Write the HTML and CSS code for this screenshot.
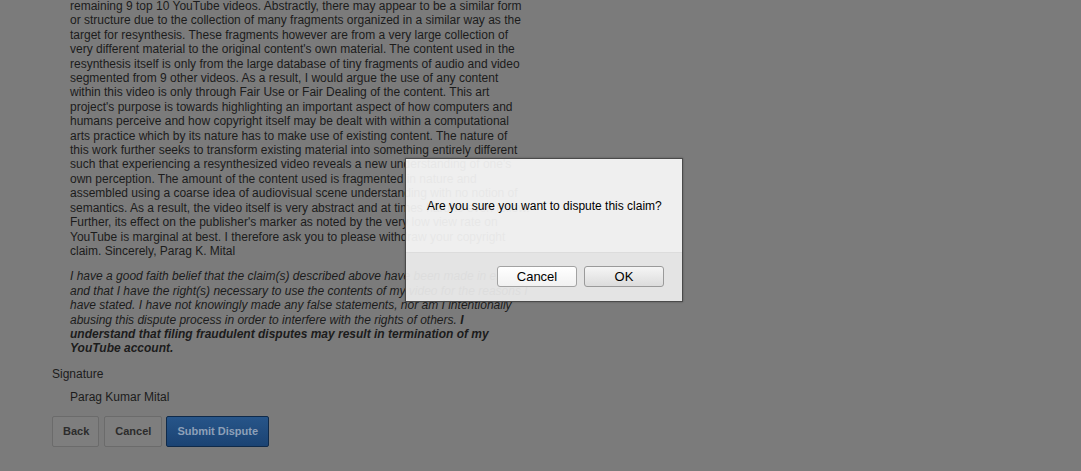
FILE: index.html
```html
<!DOCTYPE html>
<html>
<head>
<meta charset="utf-8">
<link rel="stylesheet" href="styles.css">
</head>
<body>
<div class="page">
  <div class="form">
    <p class="statement">remaining 9 top 10 YouTube videos. Abstractly, there may appear to be a similar form<br>or structure due to the collection of many fragments organized in a similar way as the<br>target for resynthesis. These fragments however are from a very large collection of<br>very different material to the original content's own material. The content used in the<br>resynthesis itself is only from the large database of tiny fragments of audio and video<br>segmented from 9 other videos. As a result, I would argue the use of any content<br>within this video is only through Fair Use or Fair Dealing of the content. This art<br>project's purpose is towards highlighting an important aspect of how computers and<br>humans perceive and how copyright itself may be dealt with within a computational<br>arts practice which by its nature has to make use of existing content. The nature of<br>this work further seeks to transform existing material into something entirely different<br>such that experiencing a resynthesized video reveals a new understanding of one's<br>own perception. The amount of the content used is fragmented in nature and<br>assembled using a coarse idea of audiovisual scene understanding with no notion of<br>semantics. As a result, the video itself is very abstract and at times hard to even follow.<br>Further, its effect on the publisher's marker as noted by the very low view rate on<br>YouTube is marginal at best. I therefore ask you to please withdraw your copyright<br>claim. Sincerely, Parag K. Mital</p>
    <p class="affirm">I have a good faith belief that the claim(s) described above have been made in error<br>and that I have the right(s) necessary to use the contents of my video for the reasons I<br>have stated. I have not knowingly made any false statements, nor am I intentionally<br>abusing this dispute process in order to interfere with the rights of others. <b>I<br>understand that filing fraudulent disputes may result in termination of my<br>YouTube account.</b></p>
    <div class="label">Signature</div>
    <div class="signature">Parag Kumar Mital</div>
    <div class="actions">
      <button class="btn btn-back">Back</button>
      <button class="btn btn-cancel">Cancel</button>
      <button class="btn btn-primary">Submit Dispute</button>
    </div>
  </div>
</div>
<div class="dialog">
  <div class="dialog-body">Are you sure you want to dispute this claim?</div>
  <div class="dialog-footer">
    <button class="dbtn">Cancel</button>
    <button class="dbtn dbtn-default">OK</button>
  </div>
</div>
</body>
</html>
```
FILE: styles.css
```css
html, body {
  margin: 0;
  padding: 0;
  height: 100%;
  background: #7b7b7b;
  overflow: hidden;
}
body {
  font-family: "Liberation Sans", Arial, sans-serif;
  font-size: 12px;
  color: #1c1c1c;
}
.page {
  padding-left: 52px;
}
.form {
  margin-top: -1px;
}
.statement, .affirm {
  margin: 0 0 0 18px;
  line-height: 14.4px;
}
.affirm {
  margin-top: 11px;
  font-style: italic;
}
.label {
  margin-top: 11px;
  line-height: 14.4px;
}
.signature {
  margin: 9px 0 0 18px;
  line-height: 14.4px;
}
.actions {
  display: flex;
  margin-top: 11px;
}
.btn {
  height: 31px;
  padding: 0 9px;
  border: 1px solid #6b6b6b;
  border-radius: 2px;
  background: #7e7e7e;
  color: #2c2c2c;
  font-family: "Liberation Sans", Arial, sans-serif;
  font-size: 11px;
  font-weight: bold;
  white-space: nowrap;
}
.btn-back { padding: 0 9px 0 10px; margin-right: 5px; }
.btn-cancel { padding: 0 10px; margin-right: 4px; }
.btn-primary {
  border-color: #0f2a4a;
  background: linear-gradient(#275589, #1b4373);
  color: #8ea0b8;
  padding: 0 10px;
}
.dialog {
  position: absolute;
  left: 405px;
  top: 158px;
  width: 276px;
  height: 142px;
  border: 1px solid #4a4a4a;
  box-shadow: 0 0 2px rgba(0,0,0,0.3);
  display: flex;
  flex-direction: column;
}
.dialog-body {
  height: 94px;
  box-sizing: border-box;
  padding: 40px 0 0 21px;
  background: rgba(248, 248, 248, 0.92);
  font-size: 12px;
  color: #000;
  border-bottom: 1px solid #dcdcdc;
}
.dialog-footer {
  flex: 1;
  background: rgba(236, 236, 236, 0.93);
  display: flex;
  justify-content: flex-end;
  align-items: flex-start;
  gap: 7px;
  padding: 13px 18px 0 0;
}
.dbtn {
  width: 80px;
  height: 21px;
  border: 1px solid #a2a2a2;
  border-radius: 3px;
  background: linear-gradient(#ffffff, #f1f1f1);
  font-family: "Liberation Sans", Arial, sans-serif;
  font-size: 13px;
  color: #000;
  padding: 0;
}
.dbtn-default {
  background: linear-gradient(#f5f5f5, #dcdcdc);
  border-color: #9a9a9a;
}
```
